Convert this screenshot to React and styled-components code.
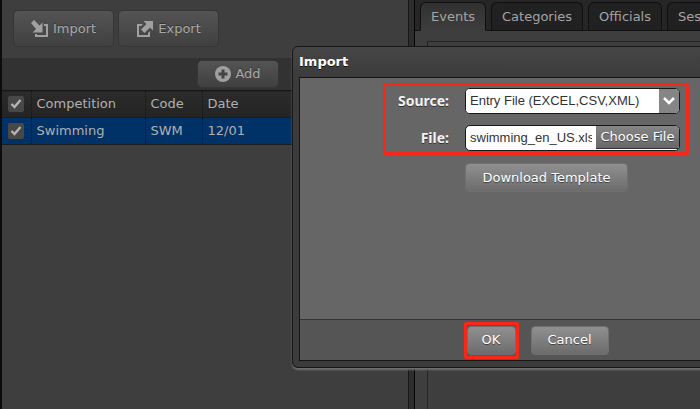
import React, { useState } from "react";
import styled, { createGlobalStyle } from "styled-components";

const ui = `"DejaVu Sans", Verdana, sans-serif`;

const GlobalStyle = createGlobalStyle`
  * { box-sizing: border-box; }
  html, body { margin: 0; height: 100%; overflow: hidden; }
  body { background: #3e3e3e; color: #b0b0b0; font: 13px/18px ${ui}; }
  button, input, select { font: inherit; margin: 0; }
`;

const Page = styled.div`
  display: grid;
  grid-template-columns: minmax(0, 406fr) 7px minmax(0, 285fr);
  min-height: 100vh;
  border-left: 2px solid #0c0c0c;
`;

const Pane = styled.section`
  min-width: 0;
  background: #3e3e3e;
`;

const Splitter = styled.div`
  background: #2d2d2d;
  border-left: 1px solid #181818;
  border-right: 1px solid #060606;
`;

const Toolbar = styled.div`
  display: flex;
  gap: 4px;
  padding: 10px 11px 11px;
`;

const DimButton = styled.button`
  display: flex;
  align-items: center;
  justify-content: center;
  gap: 4px;
  height: ${(p) => (p.$small ? "28px" : "37px")};
  width: ${(p) => (p.$small ? "82px" : "101px")};
  padding: 0;
  color: #a8a8a8;
  background: linear-gradient(#545454, #404040);
  border: 1px solid #363636;
  border-radius: 5px;
  text-shadow: 0 -1px #333;
`;

const AddBar = styled.div`
  display: flex;
  height: 32px;
  padding: 2px 0 2px 195px;
  background: #323232;
`;

const Table = styled.table`
  width: 100%;
  table-layout: fixed;
  border-collapse: collapse;
`;

const Row = styled.tr`
  height: 27px;
  background: ${(p) => (p.$selected ? "#003268" : "linear-gradient(#2b2b2b, #242424)")};
  border-top: 1px solid #161616;
  border-bottom: 1px solid #1c1c1c;
`;

const cell = `
  padding: 0 5px;
  text-align: left;
  font-weight: 400;
  border-right: 1px dotted #151515;
  &:first-child { padding: 0 6px; }
  &:last-child { border-right: 0; }
`;
const HeadCell = styled.th`${cell}`;
const Cell = styled.td`${cell}`;

const Tick = styled.input`
  display: block;
  appearance: none;
  width: 16px;
  height: 16px;
  margin: 0;
  border-radius: 2px;
  background: #484848;
  &:checked {
    background: #484848 url("data:image/svg+xml,%3Csvg xmlns='http://www.w3.org/2000/svg' viewBox='0 0 16 16'%3E%3Cpath d='M3.5 8 6.5 11 12.5 4' fill='none' stroke='%23b4b4b4' stroke-width='2.4'/%3E%3C/svg%3E");
  }
`;

const Tabs = styled.div`
  display: flex;
  gap: 5px;
  height: 31px;
  padding: 2px 0 0 5px;
  overflow: hidden;
  background: #262626;
  box-shadow: inset 0 -1px #121212;
`;

const Tab = styled.button`
  flex: none;
  padding: 0 10px;
  color: #a4a4a4;
  background: ${(p) => (p.$active ? "linear-gradient(#303030, #3e3e3e)" : "#212121")};
  border: 1px solid #101010;
  border-bottom-color: ${(p) => (p.$active ? "#3e3e3e" : "#121212")};
  border-radius: 6px 6px 0 0;
`;

const TabPanel = styled.div`
  height: calc(100vh - 41px);
  margin: 10px 0 0 12px;
  border: solid #242424;
  border-width: 1px 0 0 1px;
`;

const Dialog = styled.div`
  position: absolute;
  top: 46px;
  left: 292px;
  width: 488px;
  padding: 0 6px 6px;
  color: #f2f2f2;
  background: linear-gradient(#464646, #3b3b3b 32px);
  border: 1px solid #171717;
  border-radius: 6px;
  box-shadow: 0 2px 2px #707070;
`;

const DialogTitle = styled.h2`
  margin: 0;
  padding: 6px 0;
  font: 700 13px/18px ${ui};
  color: #fff;
  text-shadow: 0 1px #111;
`;

const Frame = styled.form`
  border: 1px solid #161616;
`;

const Body = styled.div`
  display: flex;
  flex-direction: column;
  align-items: flex-start;
  min-height: 241px;
  padding: 5px 0 0 83px;
  background: #666;
`;

const Highlight = styled.div`
  display: flex;
  padding: 1px 0;
  border: 3px solid #f92717;
  border-radius: 2px;
`;

const Fields = styled(Highlight)`
  display: grid;
  grid-template-columns: 63px 215px;
  align-items: center;
  gap: 11px 16px;
  padding: 2px 6px 1px 0;
`;

const Label = styled.label`
  text-align: right;
  font: 700 14px/18px "Noto Sans", sans-serif;
  text-shadow: 0 1px #333;
`;

const Control = styled.div`
  display: flex;
  height: 26px;
  overflow: hidden;
  background: #fff;
  border: 1px solid #181818;
  border-radius: 5px;
`;

const Select = styled.select`
  flex: 1;
  min-width: 0;
  appearance: none;
  padding: 0 4px;
  color: #333;
  font: 13px/18px "Liberation Sans", Arial, sans-serif;
  background: #fff;
  border: 0;
`;

const Arrow = styled.span`
  display: flex;
  align-items: center;
  justify-content: center;
  width: 20px;
  background: #858585;
  pointer-events: none;
`;

const FileName = styled.input`
  flex: 1;
  min-width: 0;
  padding: 0;
  margin: 0 4px;
  color: #333;
  font: 13px/18px "Liberation Sans", Arial, sans-serif;
  border: 0;
`;

const ChooseButton = styled.button`
  height: 23px;
  width: 83px;
  padding: 0;
  color: #fff;
  background: linear-gradient(#858585, #686868);
  border: 0;
  border-bottom: 1px solid #333;
  text-shadow: 0 1px #444;
`;

const Button = styled.button`
  height: 29px;
  width: ${(p) => p.$width};
  padding: 0;
  color: #fff;
  background: linear-gradient(#909090, #6c6c6c);
  border: 1px solid #707070;
  border-radius: 4px;
  text-shadow: 0 1px #444;
`;

const DownloadRow = styled.div`
  padding: 8px 0 0 82px;
`;

const Footer = styled.div`
  display: flex;
  align-items: center;
  justify-content: center;
  gap: 12px;
  height: 41px;
  background: #555;
  border-top: 1px solid #333;
`;

const ImportIcon = () => (
  <svg width="18" height="18" viewBox="0 0 18 18" fill="#a0a0a0" aria-hidden="true">
    <path d="M0 3 3 0 8.5 5.5 11.5 2.5V12.5H1.5L5 9Z" />
    <path d="M13 4H17V17H4V14H6V15H15V6H13Z" />
  </svg>
);

const ExportIcon = () => (
  <svg width="18" height="18" viewBox="0 0 18 18" fill="#a0a0a0" aria-hidden="true">
    <path d="M7.5 1H17V10.5L14 7.5 8.5 13 5 9.5 10.5 4Z" />
    <path d="M1 4H7L5 6H3V15H12V13L14 11V17H1Z" />
  </svg>
);

const PlusIcon = () => (
  <svg width="16" height="16" viewBox="0 0 16 16" aria-hidden="true">
    <circle cx="8" cy="8" r="8" fill="#a0a0a0" />
    <path d="M8 3.5V12.5M3.5 8H12.5" stroke="#444" strokeWidth="3" />
  </svg>
);

export default function App() {
  const [tab, setTab] = useState("Events");
  return (
    <>
      <GlobalStyle />
      <Page>
        <Pane>
          <Toolbar>
            <DimButton><ImportIcon />Import</DimButton>
            <DimButton><ExportIcon />Export</DimButton>
          </Toolbar>
          <AddBar>
            <DimButton $small><PlusIcon />Add</DimButton>
          </AddBar>
          <Table>
            <colgroup>
              <col width="29" /><col width="114" /><col width="57" /><col />
            </colgroup>
            <thead>
              <Row>
                <HeadCell><Tick type="checkbox" aria-label="Select all" defaultChecked /></HeadCell>
                <HeadCell>Competition</HeadCell>
                <HeadCell>Code</HeadCell>
                <HeadCell>Date</HeadCell>
              </Row>
            </thead>
            <tbody>
              <Row $selected>
                <Cell><Tick type="checkbox" aria-label="Select Swimming" defaultChecked /></Cell>
                <Cell>Swimming</Cell>
                <Cell>SWM</Cell>
                <Cell>12/01</Cell>
              </Row>
            </tbody>
          </Table>
        </Pane>
        <Splitter />
        <Pane>
          <Tabs role="tablist">
            {["Events", "Categories", "Officials", "Sessions"].map((name) => (
              <Tab key={name} role="tab" aria-selected={tab === name} $active={tab === name} onClick={() => setTab(name)}>
                {name}
              </Tab>
            ))}
          </Tabs>
          <TabPanel role="tabpanel" />
        </Pane>
      </Page>
      <Dialog role="dialog" aria-labelledby="dialog-title">
        <DialogTitle id="dialog-title">Import</DialogTitle>
        <Frame onSubmit={(e) => e.preventDefault()}>
          <Body>
            <Fields>
              <Label htmlFor="source">Source:</Label>
              <Control>
                <Select id="source"><option>Entry File (EXCEL,CSV,XML)</option></Select>
                <Arrow>
                  <svg width="12" height="8" viewBox="0 0 12 8" fill="none" stroke="#fff" strokeWidth="2.5" aria-hidden="true">
                    <path d="M1 1 6 6 11 1" />
                  </svg>
                </Arrow>
              </Control>
              <Label htmlFor="file">File:</Label>
              <Control>
                <FileName id="file" type="text" readOnly value="swimming_en_US.xlsx" />
                <ChooseButton type="button">Choose File</ChooseButton>
              </Control>
            </Fields>
            <DownloadRow>
              <Button type="button" $width="163px">Download Template</Button>
            </DownloadRow>
          </Body>
          <Footer>
            <Highlight>
              <Button type="submit" $width="49px">OK</Button>
            </Highlight>
            <Button type="button" $width="78px">Cancel</Button>
          </Footer>
        </Frame>
      </Dialog>
    </>
  );
}
